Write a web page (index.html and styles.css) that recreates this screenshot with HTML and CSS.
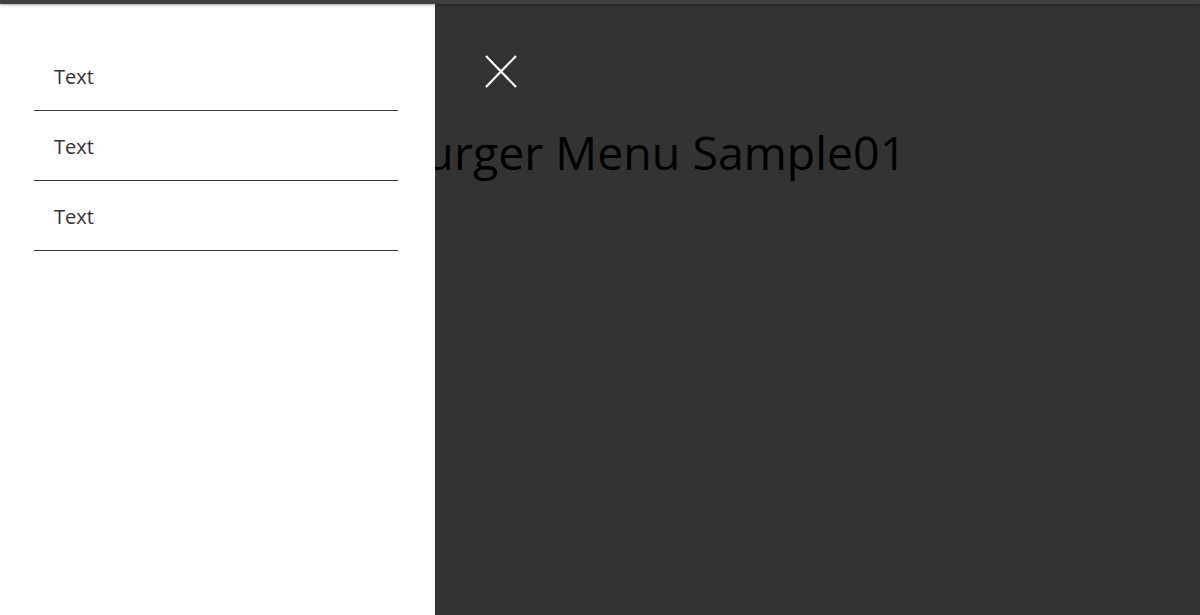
FILE: index.html
```html
<!DOCTYPE html>
<html lang="en">
<head>
<meta charset="utf-8">
<title>Hamburger Menu Sample01</title>
<link rel="stylesheet" href="styles.css">
</head>
<body>
<div class="topbar"></div>
<div class="stage">
  <main class="content">
    <h1 class="title">Hamburger Menu Sample01</h1>
  </main>
  <div class="overlay"></div>
  <nav class="drawer">
    <ul class="menu">
      <li class="menu-item">Text</li>
      <li class="menu-item">Text</li>
      <li class="menu-item">Text</li>
    </ul>
  </nav>
  <button class="close" aria-label="Close">
    <svg viewBox="0 0 32 33" width="32" height="33">
      <path d="M1 1 L31 32 M31 1 L1 32" stroke="#fff" stroke-width="2.2" fill="none"/>
    </svg>
  </button>
</div>
</body>
</html>
```
FILE: styles.css
```css
html, body {
  margin: 0;
  padding: 0;
  height: 100%;
}
body {
  display: flex;
  flex-direction: column;
  font-family: "Open Sans", "Noto Sans", sans-serif;
  background: #fff;
  overflow: hidden;
}
.topbar {
  height: 4px;
  background: #404040;
  box-shadow: 0 1px 3px rgba(0,0,0,0.35);
  position: relative;
  z-index: 5;
  flex: none;
}
.stage {
  flex: 1;
  position: relative;
}
.content {
  padding-top: 116px;
  text-align: center;
}
.title {
  margin: 0;
  font-size: 46.5px;
  font-weight: 400;
  color: #000;
  line-height: normal;
}
.overlay {
  position: absolute;
  inset: 0;
  background: rgba(0,0,0,0.8);
}
.drawer {
  position: absolute;
  top: 0;
  left: 0;
  bottom: 0;
  width: 435px;
  background: #fff;
  padding-top: 36.5px;
  box-sizing: border-box;
}
.menu {
  list-style: none;
  margin: 0 37px 0 34px;
  padding: 0;
}
.menu-item {
  font-size: 20px;
  color: #333;
  line-height: 27px;
  padding: 22px 20px 20px;
  border-bottom: 1.3px solid #3a3a3a;
}
.close {
  position: absolute;
  top: 51px;
  left: 485px;
  width: 32px;
  height: 33px;
  padding: 0;
  border: 0;
  background: none;
  cursor: pointer;
  display: block;
}
.close svg {
  display: block;
}
```
